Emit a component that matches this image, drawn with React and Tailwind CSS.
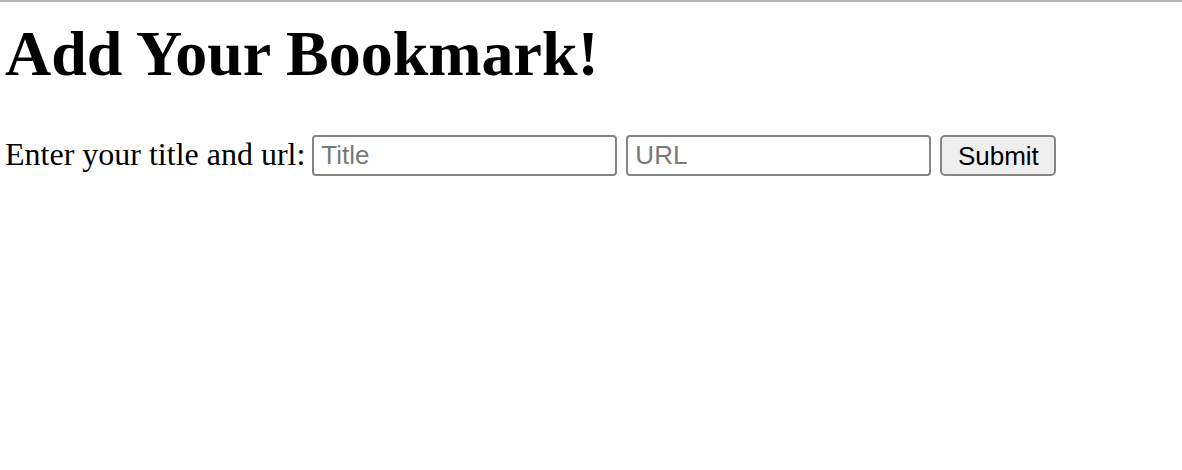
export default function App() {
    return (
        <div className="min-h-[470px] bg-white border-t-2 border-[#b4b4b4] pl-[5px] text-black">
            <h1 className="mt-[15px] text-[64px] leading-[74px] font-bold font-['Liberation_Serif',serif]">
                Add Your Bookmark!
            </h1>

            <form className="mt-[44px] flex items-start" onSubmit={e => e.preventDefault()}>
                <label className="mt-[2px] text-[32px] leading-[35px] font-['Liberation_Serif',serif] mr-[7px]">
                    Enter your title and url:
                </label>
                <input
                    type="text"
                    placeholder="Title"
                    className="w-[305px] h-[41px] px-[7px] border-2 border-[#858585] rounded-[4px] text-[26px] font-['Liberation_Sans',Arial,sans-serif] placeholder:text-[#7a7a7a] outline-none"
                />
                <input
                    type="text"
                    placeholder="URL"
                    className="ml-[9px] w-[305px] h-[41px] px-[7px] border-2 border-[#858585] rounded-[4px] text-[26px] font-['Liberation_Sans',Arial,sans-serif] placeholder:text-[#7a7a7a] outline-none"
                />
                <button
                    type="submit"
                    className="ml-[9px] w-[116px] h-[41px] bg-[#efefef] border-2 border-[#858585] rounded-[5px] text-[26px] font-['Liberation_Sans',Arial,sans-serif]"
                >
                    Submit
                </button>
            </form>
        </div>
    );
}
